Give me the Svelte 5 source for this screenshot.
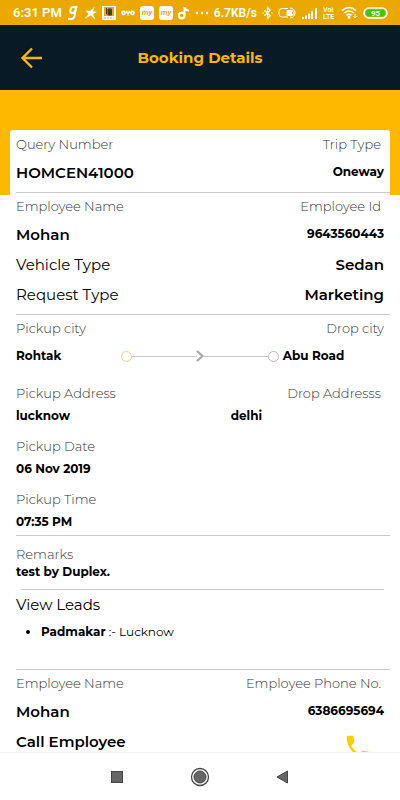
<script lang="ts">
	type Contact = { name: string; phone: string };
	type Lead = { name: string; city: string };

	const booking = {
		query: 'HOMCEN41000',
		trip: 'Oneway',
		vehicle: 'Sedan',
		request: 'Marketing',
		pickupCity: 'Rohtak',
		dropCity: 'Abu Road',
		pickupAddress: 'lucknow',
		dropAddress: 'delhi',
		date: '06 Nov 2019',
		time: '07:35 PM',
		remarks: 'test by Duplex.',
	};

	const employee = { name: 'Mohan', id: '9643560443' };
	const contact: Contact = { name: 'Mohan', phone: '6386695694' };
	const leads: Lead[] = [{ name: 'Padmakar', city: 'Lucknow' }];
</script>

{#snippet pair(leftLabel: string, rightLabel: string, left: string, right: string)}
	<div class="row label">
		<span>{leftLabel}</span>
		<span class="label-end">{rightLabel}</span>
	</div>
	<div class="row value">
		<strong>{left}</strong>
		<strong class="code">{right}</strong>
	</div>
{/snippet}

{#snippet myBadge()}
	<svg width="14" height="14" viewBox="0 0 14 14">
		<rect width="14" height="14" rx="3" fill="#fff" />
		<text x="7" y="9" text-anchor="middle" font-size="8" font-style="italic" font-weight="500" fill="#d99c00">my</text>
	</svg>
{/snippet}

<div class="screen">
	<div class="status">
		<span class="clock">6:31 PM</span>
		<svg width="12" height="16" viewBox="0 0 12 16" fill="none" stroke="#fff" stroke-width="2">
			<path d="M9 2H6Q4 2 3.500 5T5 8Q8 8 9 3L10 1M9 3L7.500 11Q7 14 4 14H1" />
		</svg>
		<svg width="13" height="14" viewBox="0 0 13 14" fill="#fff">
			<path d="M11 0.500L8.800 5L13 6L9 8L11.500 13.500L6.500 9.500L0.500 13L4.500 8L1.500 4.500L6 5Z" />
		</svg>
		<svg width="14" height="14" viewBox="0 0 14 14">
			<rect width="14" height="14" fill="#fff" />
			<rect x="2" y="1" width="10" height="9" fill="#eba900" />
			<path d="M4.500 2V8M6 3H9.500V9H6Z" fill="#4d3d10" stroke="#4d3d10" />
			<path d="M2 12H12" stroke="#aaa" stroke-dasharray="2 1" />
		</svg>
		<svg width="14" height="6" viewBox="0 0 14 6" fill="none" stroke="#fff" stroke-width="1.600">
			<circle cx="2.500" cy="3" r="1.600" />
			<path d="M5 1L7 3.500L9 1M7 3V5.500" />
			<circle cx="11.500" cy="3" r="1.600" />
		</svg>
		{@render myBadge()}
		{@render myBadge()}
		<svg width="12" height="14" viewBox="0 0 12 14" fill="none" stroke="#fff" stroke-width="2">
			<path d="M6.500 1V9.500A2.800 2.800 0 1 1 4 6.700M6.500 1.500Q7.500 4.500 11 4.800" />
			<circle cx="3.700" cy="9.500" r="2.800" />
		</svg>
		<svg width="14" height="4" viewBox="0 0 14 4" fill="#fff">
			<circle cx="2" cy="2" r="1.200" />
			<circle cx="7" cy="2" r="1.200" />
			<circle cx="12" cy="2" r="1.200" />
		</svg>
		<span>6.7KB/s</span>
		<svg width="11" height="14" viewBox="0 0 12 14" fill="none" stroke="#fff" stroke-width="1.300">
			<path d="M2.500 4L9 10L6 13V1L9 4L2.500 10" />
			<path d="M0.500 7H2M10 7H11.500" />
		</svg>
		<svg width="19" height="12" viewBox="0 0 19 12" fill="none" stroke="#fff">
			<path d="M10 1.500H4A3 3 0 0 0 1 4.500V7A3 3 0 0 0 4 10H10" />
			<path d="M9 3.500H13.500V8.500H9Z" fill="#fff" />
			<path d="M12 1A5 5 0 1 1 12 11M12.500 3A3 3 0 1 1 12.500 9" />
		</svg>
		<svg width="16" height="12" viewBox="0 0 16 12" fill="#fff">
			<path d="M0 10H2V12H0ZM3 8.500H5V12H3ZM6 6.500H8V12H6ZM9 4H11V12H9ZM13 1H15V12H13Z" />
		</svg>
		<svg width="13" height="14" viewBox="0 0 13 14" fill="#fff" font-size="7" font-weight="600">
			<text x="0" y="6">Vo≀</text>
			<text x="0" y="13">LTE</text>
		</svg>
		<svg width="17" height="13" viewBox="0 0 17 13" fill="none" stroke="#fff" stroke-width="1.600">
			<path d="M1 4.500Q8 -1.500 15 4.500M3.300 7Q8 3 12.700 7M5.500 9.400Q8 7.400 10.500 9.400" />
			<circle cx="8" cy="11.300" r="0.700" fill="#fff" />
			<path d="M14 8V12M12.500 10.500L14 12L15.500 10.500" stroke-width="1" />
		</svg>
		<svg width="25" height="12" viewBox="0 0 25 12">
			<rect x="1" y="1" width="23" height="10" rx="5" fill="#eba900" stroke="#fff" stroke-width="1.500" />
			<rect x="3" y="2.500" width="19" height="7" rx="3" fill="#3fc414" />
			<text x="12.500" y="9" text-anchor="middle" font-size="8" font-weight="700" fill="#fff">95</text>
		</svg>
	</div>

	<header class="topbar">
		<button type="button" class="back" aria-label="Back">
			<svg width="24" height="24" viewBox="0 0 24 24" fill="none" stroke="#fdb702" stroke-width="2.400">
				<path d="M22 12H3M12 2.500L2.500 12L12 21.500" />
			</svg>
		</button>
		<h1>Booking Details</h1>
	</header>

	<main>
		<div class="card">
			<section class="first">
				{@render pair('Query Number', 'Trip Type', booking.query, booking.trip)}
			</section>
			<hr />
			<section>
				{@render pair('Employee Name', 'Employee Id', employee.name, employee.id)}
				<div class="row value">
					<span>Vehicle Type</span>
					<strong>{booking.vehicle}</strong>
				</div>
				<div class="row value">
					<span>Request Type</span>
					<strong>{booking.request}</strong>
				</div>
			</section>
			<hr />
			<section>
				<div class="row label">
					<span>Pickup city</span>
					<span>Drop city</span>
				</div>
				<div class="route">
					<strong>{booking.pickupCity}</strong>
					<div class="track">
						<i class="stop stop-from"></i>
						<i class="line"></i>
						<svg width="10" height="12" viewBox="0 0 10 12" fill="none" stroke="#a8a8a8" stroke-width="2.200">
							<path d="M2 1L7.500 6L2 11" />
						</svg>
						<i class="line"></i>
						<i class="stop"></i>
					</div>
					<strong>{booking.dropCity}</strong>
				</div>
				<div class="row label">
					<span>Pickup Address</span>
					<span class="label-end">Drop Addresss</span>
				</div>
				<div class="address">
					<strong>{booking.pickupAddress}</strong>
					<strong>{booking.dropAddress}</strong>
				</div>
				<div class="field">
					<div class="label">Pickup Date</div>
					<strong>{booking.date}</strong>
				</div>
				<div class="field">
					<div class="label">Pickup Time</div>
					<strong>{booking.time}</strong>
				</div>
			</section>
			<hr />
			<section class="remarks">
				<div class="label">Remarks</div>
				<strong>{booking.remarks}</strong>
			</section>
			<hr class="inset" />
			<section class="leads">
				<h2>View Leads</h2>
				<ul>
					{#each leads as lead}
						<li><strong>{lead.name}</strong> :- {lead.city}</li>
					{/each}
				</ul>
			</section>
			<hr />
			<section>
				{@render pair('Employee Name', 'Employee Phone No.', contact.name, contact.phone)}
				<div class="row value call">
					<strong>Call Employee</strong>
					<a href="tel:{contact.phone}" aria-label="Call {contact.name}">
						<svg width="30" height="30" viewBox="0 0 24 24" fill="#f8d000">
							<path d="M6.620 10.790c1.440 2.830 3.760 5.140 6.590 6.590l2.200-2.200c.27-.27.67-.36 1.020-.24 1.120.37 2.330.57 3.570.57.55 0 1 .45 1 1V20c0 .55-.45 1-1 1C10.610 21 3 13.390 3 4c0-.55.45-1 1-1h3.500c.55 0 1 .45 1 1 0 1.250.2 2.450.57 3.570.11.35.03.74-.25 1.020z" />
						</svg>
					</a>
				</div>
			</section>
		</div>
	</main>

	<nav class="system-nav">
		<button type="button" aria-label="Recent apps">
			<svg width="20" height="20" viewBox="0 0 20 20">
				<rect x="4.500" y="4.500" width="11" height="11" fill="#666" stroke="#444" />
			</svg>
		</button>
		<button type="button" aria-label="Home">
			<svg width="20" height="20" viewBox="0 0 20 20">
				<circle cx="10" cy="10" r="8.500" fill="none" stroke="#444" stroke-width="1.300" />
				<circle cx="10" cy="10" r="6" fill="#666" stroke="#444" />
			</svg>
		</button>
		<button type="button" aria-label="Go back">
			<svg width="20" height="20" viewBox="0 0 20 20">
				<path d="M4 10L14.500 4V16Z" fill="#666" stroke="#444" />
			</svg>
		</button>
	</nav>
</div>

<style>
	:global(body) {
		margin: 0;
		background: #fff;
	}

	.screen {
		display: flex;
		flex-direction: column;
		height: 100vh;
		font-family: Montserrat, Inter, sans-serif;
		font-size: 12px;
		color: #000;
	}

	.status {
		display: flex;
		flex: none;
		align-items: center;
		justify-content: space-between;
		height: 25px;
		padding: 0 12px 0 13px;
		box-sizing: border-box;
		background: #eba900;
		color: #fff;
		font-family: Roboto, sans-serif;
		font-size: 12px;
		font-weight: 600;
	}

	.clock {
		font-size: 13px;
	}

	.topbar {
		display: grid;
		flex: none;
		grid-template-columns: 1fr auto 1fr;
		align-items: center;
		height: 65px;
		padding: 0 20px;
		background: #071a26;
	}

	h1 {
		margin: 0;
		font-size: 15px;
		font-weight: 700;
		color: #fdb702;
	}

	button {
		display: flex;
		margin: 0;
		padding: 0;
		border: 0;
		background: none;
		cursor: pointer;
	}

	.back {
		justify-self: start;
	}

	main {
		flex: 1;
		min-height: 0;
		overflow-y: auto;
		scrollbar-width: none;
		background: linear-gradient(#ffb800 105px, #fff 105px);
	}

	.card {
		margin: 40px 10px 0;
		border-radius: 3px;
		background: #fff;
	}

	section {
		padding: 0 6px 4px;
	}

	.first {
		padding-top: 1px;
	}

	hr {
		height: 1px;
		margin: 0 0 0 6px;
		border: 0;
		background: #c8c8c8;
	}

	.inset {
		margin: 0 6px 0 11px;
	}

	.row {
		display: flex;
		justify-content: space-between;
	}

	.label {
		font-size: 13px;
		font-weight: 300;
		line-height: 27px;
		color: #333;
	}

	.label-end {
		padding-right: 3px;
	}

	.value {
		font-size: 15px;
		line-height: 30px;
	}

	strong {
		font-weight: 700;
	}

	.value strong {
		font-weight: 600;
	}

	.value .code {
		font-size: 12px;
		font-weight: 700;
		line-height: 27px;
	}

	.route {
		display: grid;
		grid-template-columns: 2fr 3fr 2fr;
		padding-bottom: 10px;
		line-height: 28px;
	}

	.track {
		display: flex;
		align-items: center;
	}

	.stop {
		width: 9px;
		height: 9px;
		border: 1px solid #bbb;
		border-radius: 50%;
	}

	.stop-from {
		border-color: #fdca80;
	}

	.line {
		flex: 1;
		height: 1px;
		background: #c8c8c8;
	}

	.track svg {
		margin: 0 -2px;
	}

	.track + strong {
		padding-left: 4px;
	}

	.address {
		display: grid;
		grid-template-columns: 7fr 5fr;
		line-height: 18px;
	}

	.field {
		padding-top: 8px;
		line-height: 18px;
	}

	.remarks {
		padding-top: 9px;
		padding-bottom: 8px;
		line-height: 18px;
	}

	.remarks .label {
		line-height: 18px;
	}

	.leads {
		padding-bottom: 25px;
	}

	h2 {
		margin: 0;
		font-size: 15px;
		font-weight: 400;
		line-height: 30px;
	}

	ul {
		margin: 0;
		padding-left: 25px;
		line-height: 24px;
	}

	.call a {
		display: flex;
		padding: 5px 11px 0 0;
	}

	.system-nav {
		display: flex;
		flex: none;
		align-items: center;
		justify-content: center;
		gap: 63px;
		height: 48px;
		border-top: 1px solid #f2f2f2;
		box-sizing: border-box;
		background: #fff;
	}
</style>
